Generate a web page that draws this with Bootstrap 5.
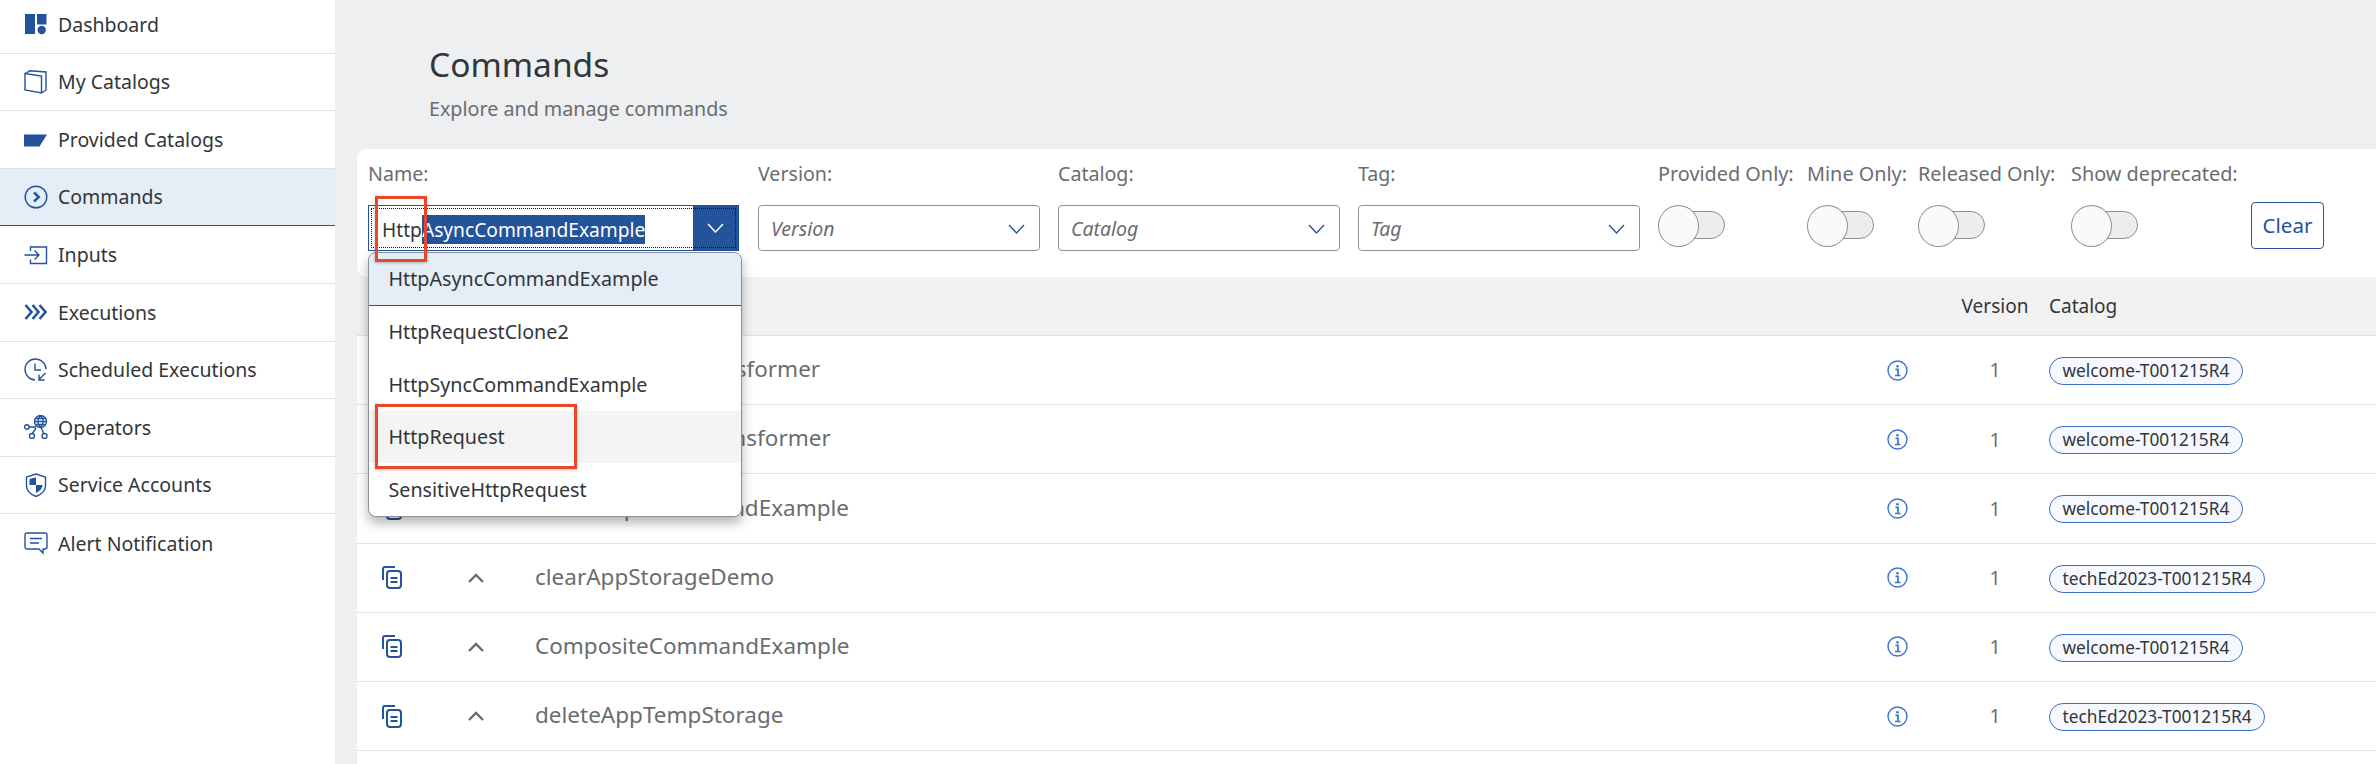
<!DOCTYPE html>
<html lang="en">
<head>
  <meta charset="UTF-8">
  <title>Commands</title>
  <link href="https://cdn.jsdelivr.net/npm/bootstrap@5.3.3/dist/css/bootstrap.min.css" rel="stylesheet">
  <style>
    html, body { height: 100%; overflow: hidden; }
    body {
      position: relative;
      font-family: "Noto Sans", "Liberation Sans", sans-serif;
      color: #32363a;
      background: #edeff1;
    }

    /* side menu */
    .side-menu { width: 335px; flex: none; background: #fff; overflow: hidden; }
    .side-menu .list-group { margin-top: -4px; }
    .side-menu .list-group-item {
      height: 57.6px;
      padding: 0 0 0 24px;
      gap: 10px;
      font-size: 19.5px;
      color: #32363a;
      border-color: #e1e1e1;
      border-width: 0 0 1px 0;
    }
    .side-menu .list-group-item + .list-group-item.active {
      background: #e5edf7;
      border-color: #23539b;
      border-top-width: 0;
      color: #32363a;
      margin-top: 0;
    }
    .menu-ico { width: 24px; height: 24px; flex: none; fill: none; stroke: #23539b; stroke-width: 1.4; }
    .menu-ico .solid { fill: #23539b; stroke: none; }

    /* page head */
    .page-head { height: 149px; padding: 42px 0 0 94px; }
    .page-title { font-size: 33.5px; line-height: 44px; margin: 0; font-weight: 400; color: #32363a; }
    .page-sub { font-size: 19.7px; line-height: 26px; margin: 10px 0 0; color: #6a6d70; }

    /* filter bar */
    .filter-wrap { margin-left: 22px; }
    .filter-bar {
      height: 128px;
      padding: 14px 0 0 11px;
      background: #fff;
      border-radius: 10px 0 0 10px;
    }
    .fld-label { font-size: 19.6px; line-height: 22px; color: #6a6d70; white-space: nowrap; margin-bottom: 20px; }
    .fld-toggle .fld-label { font-size: 19.85px; }
    .fld-name { width: 371px; margin-right: 19px; }
    .fld-sel { width: 282px; margin-right: 18px; }
    .fld-sel-last { margin-right: 18px; }
    .fld-provided { width: 149px; }
    .fld-mine { width: 111px; }
    .fld-released { width: 153px; }
    .fld-deprecated { width: 180px; }
    .clear-slot { padding-top: 39px; }

    .sel-box {
      height: 46px;
      border: 1px solid #89919a;
      border-radius: 4px;
      padding: 2px 14px 0 12px;
      font-size: 19.5px;
      font-style: italic;
      color: #6a6d70;
    }
    .sel-chev { width: 17px; height: 10px; fill: none; stroke: #23539b; stroke-width: 1.3; }

    .name-box {
      position: relative;
      height: 46px;
      border: 1px solid #23539b;
      font-size: 19.2px;
      background: #fff;
    }
    .name-box::after {
      content: "";
      position: absolute;
      inset: 2px;
      border: 1px dotted #111;
      pointer-events: none;
    }
    .name-text { flex: 1; padding: 2px 0 0 13px; line-height: 29px; color: #32363a; white-space: nowrap; }
    .name-sel { display: inline-block; background: #23539b; color: #fff; }
    .name-btn { width: 45px; align-self: stretch; background: #23539b; }
    .name-btn svg { width: 17px; height: 10px; fill: none; stroke: #fff; stroke-width: 1.5; }

    .name-pop {
      position: absolute;
      left: -1px;
      top: 46px;
      width: 374px;
      height: 265px;
      z-index: 5;
      background: #fff;
      border: 1px solid #89919a;
      border-radius: 8px;
      box-shadow: 0 6px 12px rgba(0, 0, 0, .3);
      overflow: hidden;
    }
    .name-pop .list-group-item {
      height: 52.6px;
      padding: 0 0 0 19.5px;
      font-size: 19.7px;
      color: #32363a;
      border: 0;
    }
    .name-pop .list-group-item.active { background: #e5edf7; color: #32363a; border-bottom: 1px solid #23539b; margin: 0; }
    .name-pop .list-group-item.hovered { background: #f4f4f4; }

    .sw-track {
      position: relative;
      width: 67px;
      height: 42px;
    }
    .sw-track::before {
      content: "";
      position: absolute;
      left: 20px;
      right: 0;
      top: 6px;
      height: 28px;
      background: #ededed;
      border: 1px solid #89919a;
      border-radius: 0 14px 14px 0;
    }
    .sw-track::after {
      content: "";
      position: absolute;
      left: 0;
      top: 0;
      width: 41px;
      height: 42px;
      background: #fafafa;
      border: 1px solid #89919a;
      border-radius: 50%;
    }
    .clear-btn {
      width: 73px;
      height: 47px;
      padding: 0;
      font-size: 20.5px;
      color: #23539b;
      background: #fff;
      border: 1px solid #23539b;
      border-radius: 4px;
    }

    /* commands table */
    .cmd-wrap { flex: 1; margin-left: 22px; background: #fff; }
    .cmd-table { table-layout: fixed; width: 2019px; margin: 0; }
    .cmd-table th, .cmd-table td {
      padding: 0;
      vertical-align: middle;
      border-bottom: 1px solid #e1e1e1;
      box-shadow: none;
    }
    .cmd-table th {
      height: 58.5px;
      background: #f2f2f2;
      font-size: 19px;
      font-weight: 400;
      color: #32363a;
    }
    .cmd-table td { height: 69.2px; font-size: 19.5px; color: #6a6d70; }
    .cmd-table .col-copy { width: 93px; padding-left: 25px; }
    .cmd-table .col-toggle { width: 73px; padding-left: 18px; }
    .cmd-table .col-cmd { width: 1322px; padding-left: 12px; padding-bottom: 2px; }
    .cmd-table td.col-cmd { font-size: 22.5px; }
    .cmd-table .col-info { width: 105px; }
    .cmd-table .col-ver { width: 90px; }
    .cmd-table .col-cat { width: 336px; padding-left: 9px; }
    .copy-ico { display: block; width: 20px; height: 23px; fill: none; stroke: #23539b; stroke-width: 2; }
    .tog-ico { display: block; width: 16px; height: 10px; fill: none; stroke: #6a6d70; stroke-width: 2.4; }
    .info-ico { display: block; margin: 0 auto; width: 21px; height: 21px; fill: none; stroke: #3d74cf; stroke-width: 1.4; }
    .cat-chip {
      display: inline-block;
      height: 28px;
      line-height: 25px;
      padding: 0 12.5px;
      font-size: 17.3px;
      color: #32363a;
      background: #f5f9ff;
      border: 1px solid #3a6fc4;
      border-radius: 14px;
    }

    /* red call-outs drawn on top of the screenshot */
    .callout {
      position: absolute;
      z-index: 10;
      border: 3px solid #e8472a;
      box-shadow: 0 1px 3px rgba(0, 0, 0, .25);
      pointer-events: none;
    }
    .callout-a { left: 375px; top: 196px; width: 52px; height: 66px; }
    .callout-b { left: 375px; top: 404px; width: 202px; height: 65px; }
  </style>
</head>
<body class="d-flex">

<!-- Side menu -->
<div class="side-menu">
  <div class="list-group list-group-flush">
    <a class="list-group-item d-flex align-items-center">
      <svg class="menu-ico" viewBox="0 0 24 24"><rect class="solid" x="1" y="2" width="10" height="20"/><rect class="solid" x="13" y="2" width="9.5" height="10.5"/><circle class="solid" cx="17.7" cy="18" r="4.2"/></svg>
      Dashboard
    </a>
    <a class="list-group-item d-flex align-items-center">
      <svg class="menu-ico" viewBox="0 0 24 24"><path d="M1 3.5 17.5 6v17L1 20zM1 3.5 6 .8 22 2v18l-4.5 3"/></svg>
      My Catalogs
    </a>
    <a class="list-group-item d-flex align-items-center">
      <svg class="menu-ico" viewBox="0 0 24 24"><path class="solid" d="M0 7.5h23l-7.5 12H0z"/></svg>
      Provided Catalogs
    </a>
    <a class="list-group-item active d-flex align-items-center">
      <svg class="menu-ico" viewBox="0 0 24 24"><circle cx="12" cy="12" r="10.8"/><path d="M10 7.5 14.8 12 10 16.5" stroke-width="2.4"/></svg>
      Commands
    </a>
    <a class="list-group-item d-flex align-items-center">
      <svg class="menu-ico" viewBox="0 0 24 24"><path d="M6.5 8V4h16v16.5h-16V16.5M.5 12H15M10.5 7.5 15 12l-4.5 4.5"/></svg>
      Inputs
    </a>
    <a class="list-group-item d-flex align-items-center">
      <svg class="menu-ico" viewBox="0 0 24 24"><path d="M1.5 5l6 7-6 7M8.5 5l6 7-6 7M15.5 5l6 7-6 7" stroke-width="2.6"/></svg>
      Executions
    </a>
    <a class="list-group-item d-flex align-items-center">
      <svg class="menu-ico" viewBox="0 0 24 24"><path d="M22 11A10.5 10.5 0 1 0 11 22M11 5.5V12h6M21.5 15 15 21.5M15 16.5V22h5.5"/></svg>
      Scheduled Executions
    </a>
    <a class="list-group-item d-flex align-items-center">
      <svg class="menu-ico" viewBox="0 0 24 24"><circle cx="16.5" cy="6.5" r="6"/><path d="M10.500 6.5h12M16.5.5c-3.500 3.500-3.500 8.500 0 12M16.5.5c3.500 3.500 3.500 8.500 0 12M11.500 3.5h10M11.500 9.5h10M5 12h7M8 19l4-6M20 19l-3-6.5"/><circle cx="2.8" cy="12" r="2.3"/><circle cx="8" cy="21" r="2.5"/><circle cx="20.5" cy="21" r="2.5"/></svg>
      Operators
    </a>
    <a class="list-group-item d-flex align-items-center">
      <svg class="menu-ico" viewBox="0 0 24 24"><path d="M12 1 21.5 4v9c0 5-4.5 8.5-9.5 10.5C7 21.5 2.5 18 2.5 13V4z"/><path class="solid" d="M5.5 6 12 4.2V12H5.5zM12 12h6.5c0 3-2.5 6-6.5 8z"/></svg>
      Service Accounts
    </a>
    <a class="list-group-item d-flex align-items-center">
      <svg class="menu-ico" viewBox="0 0 24 24"><path d="M3 2h18a2 2 0 0 1 2 2v12a2 2 0 0 1-2 2h-2v4l-4-4H3a2 2 0 0 1-2-2V4a2 2 0 0 1 2-2zM6 7.5h12M6 12h9"/></svg>
      Alert Notification
    </a>
  </div>
</div>

<!-- Main -->
<div class="flex-grow-1 d-flex flex-column overflow-hidden">
  <div class="page-head">
    <h1 class="page-title">Commands</h1>
    <p class="page-sub">Explore and manage commands</p>
  </div>

  <div class="filter-wrap">
    <div class="filter-bar d-flex align-items-start">
      <div class="fld-name">
        <div class="fld-label">Name:</div>
        <div class="name-box d-flex align-items-center">
          <div class="name-text">Http<span class="name-sel">AsyncCommandExample</span></div>
          <div class="name-btn d-flex align-items-center justify-content-center">
            <svg viewBox="0 0 17 10"><path d="M1 1l7.5 8L16 1"/></svg>
          </div>
          <div class="name-pop list-group list-group-flush">
            <div class="list-group-item active d-flex align-items-center">HttpAsyncCommandExample</div>
            <div class="list-group-item d-flex align-items-center">HttpRequestClone2</div>
            <div class="list-group-item d-flex align-items-center">HttpSyncCommandExample</div>
            <div class="list-group-item hovered d-flex align-items-center">HttpRequest</div>
            <div class="list-group-item d-flex align-items-center">SensitiveHttpRequest</div>
          </div>
        </div>
      </div>
      <div class="fld-sel">
        <div class="fld-label">Version:</div>
        <div class="sel-box d-flex align-items-center justify-content-between">Version<svg class="sel-chev" viewBox="0 0 17 10"><path d="M1 1l7.5 8L16 1"/></svg></div>
      </div>
      <div class="fld-sel">
        <div class="fld-label">Catalog:</div>
        <div class="sel-box d-flex align-items-center justify-content-between">Catalog<svg class="sel-chev" viewBox="0 0 17 10"><path d="M1 1l7.5 8L16 1"/></svg></div>
      </div>
      <div class="fld-sel fld-sel-last">
        <div class="fld-label">Tag:</div>
        <div class="sel-box d-flex align-items-center justify-content-between">Tag<svg class="sel-chev" viewBox="0 0 17 10"><path d="M1 1l7.5 8L16 1"/></svg></div>
      </div>
      <div class="fld-toggle fld-provided"><div class="fld-label">Provided Only:</div><div class="sw-track"></div></div>
      <div class="fld-toggle fld-mine"><div class="fld-label">Mine Only:</div><div class="sw-track"></div></div>
      <div class="fld-toggle fld-released"><div class="fld-label">Released Only:</div><div class="sw-track"></div></div>
      <div class="fld-toggle fld-deprecated"><div class="fld-label">Show deprecated:</div><div class="sw-track"></div></div>
      <div class="clear-slot"><button type="button" class="btn clear-btn">Clear</button></div>
    </div>
  </div>

  <div class="cmd-wrap">
    <table class="table cmd-table">
      <thead>
        <tr>
          <th class="col-copy"></th>
          <th class="col-toggle"></th>
          <th class="col-cmd"></th>
          <th class="col-info"></th>
          <th class="col-ver text-center">Version</th>
          <th class="col-cat">Catalog</th>
        </tr>
      </thead>
      <tbody id="cmdRows"></tbody>
    </table>
  </div>
</div>

<div class="callout callout-a"></div>
<div class="callout callout-b"></div>

<script>
  const commands = [
    ["batchDataRowTransformer", "welcome-T001215R4"],
    ["concatDataRowTransformer", "welcome-T001215R4"],
    ["HeadHttpsCommandExample", "welcome-T001215R4"],
    ["clearAppStorageDemo", "techEd2023-T001215R4"],
    ["CompositeCommandExample", "welcome-T001215R4"],
    ["deleteAppTempStorage", "techEd2023-T001215R4"]
  ];

  document.getElementById("cmdRows").innerHTML = commands.map(c => `
    <tr>
      <td class="col-copy">
        <svg class="copy-ico" viewBox="0 0 20 23"><path d="M1 14V3a2 2 0 0 1 2-2h10"/><rect x="5" y="5" width="14" height="17" rx="3"/><path d="M8.5 12h7M8.5 16h7"/></svg>
      </td>
      <td class="col-toggle">
        <svg class="tog-ico" viewBox="0 0 16 10"><path d="M1 9l7-7 7 7"/></svg>
      </td>
      <td class="col-cmd">${c[0]}</td>
      <td class="col-info">
        <svg class="info-ico" viewBox="0 0 21 21"><circle cx="10.5" cy="10.5" r="9.5"/><circle cx="10.5" cy="6.2" r="1.3" fill="#3d74cf" stroke="none"/><path d="M8.5 9.3h2.5v6M8 15.5h5.5" stroke-width="1.7"/></svg>
      </td>
      <td class="col-ver text-center">1</td>
      <td class="col-cat"><span class="cat-chip">${c[1]}</span></td>
    </tr>
  `).join("");
</script>
</body>
</html>
